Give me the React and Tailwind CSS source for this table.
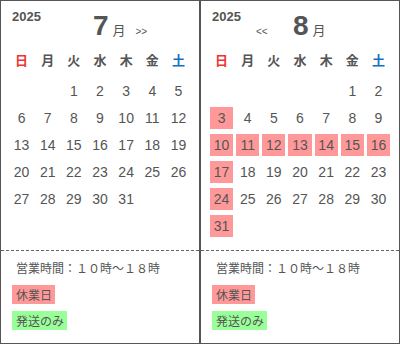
const WEEKDAYS = ['日', '月', '火', '水', '木', '金', '土']

const MONTHS = [
  { month: 7, startDay: 2, days: 31, prev: false, next: true, holidays: [] },
  { month: 8, startDay: 5, days: 31, prev: true, next: false, holidays: [3, 10, 11, 12, 13, 14, 15, 16, 17, 24, 31] },
]

const JP = { fontFamily: '"Noto Sans CJK JP", "Noto Sans", sans-serif' }
const NUM = { fontFamily: '"Liberation Sans", Arial, sans-serif' }

function buildCells(startDay, days) {
  const cells = []
  for (let i = 0; i < startDay; i++) cells.push(null)
  for (let d = 1; d <= days; d++) cells.push(d)
  return cells
}

function weekdayColor(i) {
  if (i === 0) return 'text-[#ee3333]'
  if (i === 6) return 'text-[#1170c0]'
  return 'text-[#555]'
}

function MonthPanel({ m }) {
  const cells = buildCells(m.startDay, m.days)
  return (
    <div className="w-[200px] h-[344px] border border-[#555] flex flex-col">
      <div className="h-[249px] box-content border-b border-dashed border-[#666] px-[9px]">
        {/* header: year + month nav */}
        <div className="h-[48px] flex items-start pt-[9px] pl-[2px] text-[#555]" style={NUM}>
          <div className="text-[13px] leading-[13px] font-bold">2025</div>
          <div className="ml-[15px] mt-[2px] flex items-baseline">
            <div className="w-[37px] text-[10px] leading-[10px]">{m.prev ? '<<' : ''}</div>
            <div className="text-[28px] leading-[28px] font-bold">{m.month}</div>
            <div className="ml-[4px] text-[13px] leading-[13px]" style={JP}>月</div>
            {m.next && <div className="ml-[10px] text-[10px] leading-[10px]">&gt;&gt;</div>}
          </div>
        </div>

        <div className="grid grid-cols-7 gap-x-[3px] h-[22px]" style={JP}>
          {WEEKDAYS.map((w, i) => (
            <div key={w} className={`text-center text-[13px] leading-[22px] font-bold ${weekdayColor(i)}`}>
              {w}
            </div>
          ))}
        </div>

        <div className="mt-[9px] grid grid-cols-7 gap-x-[3px] gap-y-[5px]" style={NUM}>
          {cells.map((d, i) => (
            <div
              key={i}
              className={`h-[22px] text-center text-[14px] leading-[22px] text-[#555] ${
                d && m.holidays.includes(d) ? 'bg-[#ff9999]' : ''
              }`}
            >
              {d ?? ''}
            </div>
          ))}
        </div>
      </div>

      <div className="flex-1 pl-[11px] pt-[7px] text-[#555]" style={JP}>
        <div className="pl-[4px] text-[12px] leading-[20px]">営業時間：１０時～１８時</div>
        <div className="mt-[7px] flex">
          <span className="h-[19px] leading-[19px] pl-[4px] pr-[3px] text-[12px] bg-[#ff9999]">休業日</span>
        </div>
        <div className="mt-[7px] flex">
          <span className="h-[19px] leading-[19px] pl-[4px] pr-[3px] text-[12px] bg-[#99ff99]">発送のみ</span>
        </div>
      </div>
    </div>
  )
}

export default function App() {
  return (
    <div className="w-[400px] h-[344px] bg-white flex">
      {MONTHS.map(m => (
        <MonthPanel key={m.month} m={m} />
      ))}
    </div>
  )
}
